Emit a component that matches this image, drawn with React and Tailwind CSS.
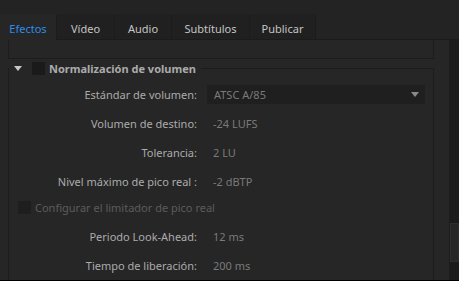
import React from 'react';

const tabs = [
  { name: 'Efectos', w: 'w-[57px]', active: true },
  { name: 'Vídeo', w: 'w-[58px]' },
  { name: 'Audio', w: 'w-[57px]' },
  { name: 'Subtítulos', w: 'w-[78px]' },
  { name: 'Publicar', w: 'w-[66px]' },
];

const Row = ({ label, value, className = 'h-[29px]' }) => (
  <div className={`grid grid-cols-[188px_1fr] gap-x-[10px] items-center ${className}`}>
    <span className="text-right text-[#ababab]">{label}</span>
    <span className="pl-[6px] text-[#7a7a7a]">{value}</span>
  </div>
);

const App = () => {
  return (
    <div className="w-[459px] h-[281px] overflow-hidden bg-[#262626] text-[11px] leading-none flex flex-col border-b border-black" style={{ fontFamily: '"Noto Sans", sans-serif' }}>
      {/* barra superior */}
      <div className="h-[14px] shrink-0 bg-[#232323]" />

      {/* pestañas */}
      <div className="h-[26px] shrink-0 flex bg-[#232323] border-b border-[#1b1b1b]">
        {tabs.map(t => (
          <div
            key={t.name}
            className={`${t.w} flex items-center justify-center pt-[3px] border-r border-[#1c1c1c] ${t.active ? 'bg-[#262626] text-[#2d8ceb] -mb-px' : 'bg-[#202020] text-[#c4c4c4]'}`}
          >
            {t.name}
          </div>
        ))}
      </div>

      <div className="flex flex-1 min-h-0">
        <div className="flex-1 pl-[8px] pr-[15px] flex flex-col">
          <div className="h-[19px] shrink-0 border border-t-0 border-[#1c1c1c]" />

          <fieldset className="mt-[3px] flex-1 border-l border-t border-r border-[#1c1c1c] pl-0 min-w-0">
            <legend className="px-[5px] h-[13px] flex items-center">
              <svg width="8" height="6" viewBox="0 0 8 6" className="mr-[10px]">
                <path d="M0 0 H8 L4 5 Z" fill="#c8c8c8" />
              </svg>
              <span className="w-[13px] h-[13px] bg-[#1a1a1a] mr-[4px]" />
              <span className="font-bold text-[#ababab]">Normalización de volumen</span>
            </legend>

            <div className="pt-[5px]">
              <div className="grid grid-cols-[188px_1fr] gap-x-[10px] items-center h-[29px]">
                <span className="text-right text-[#ababab]">Estándar de volumen:</span>
                <div className="w-[218px] h-[19px] bg-[#1f1f1f] flex items-center justify-between pl-[7px] pr-[6px] text-[#7a7a7a]">
                  <span>ATSC A/85</span>
                  <svg width="8" height="5" viewBox="0 0 8 5">
                    <path d="M0 0 H8 L4 5 Z" fill="#8a8a8a" />
                  </svg>
                </div>
              </div>
              <Row label="Volumen de destino:" value="-24 LUFS" />
              <Row label="Tolerancia:" value="2 LU" />
              <Row label="Nivel máximo de pico real :" value="-2 dBTP" />

              <div className="h-[22px] flex items-center pl-[9px]">
                <span className="w-[13px] h-[13px] bg-[#1e1e1e] mr-[4px]" />
                <span className="text-[#5c5c5c]">Configurar el limitador de pico real</span>
              </div>

              <Row label="Periodo Look-Ahead:" value="12 ms" className="h-[29px] mt-[4px]" />
              <Row label="Tiempo de liberación:" value="200 ms" />
            </div>
          </fieldset>
        </div>

        {/* barra de desplazamiento */}
        <div className="w-[10px] shrink-0 bg-[#1b1b1b] border-l border-[#1c1c1c] flex flex-col">
          <div className="mt-[183px] h-[39px] bg-[#262626] border border-[#2e2e2e]" />
        </div>
      </div>
    </div>
  );
};

export default App;
